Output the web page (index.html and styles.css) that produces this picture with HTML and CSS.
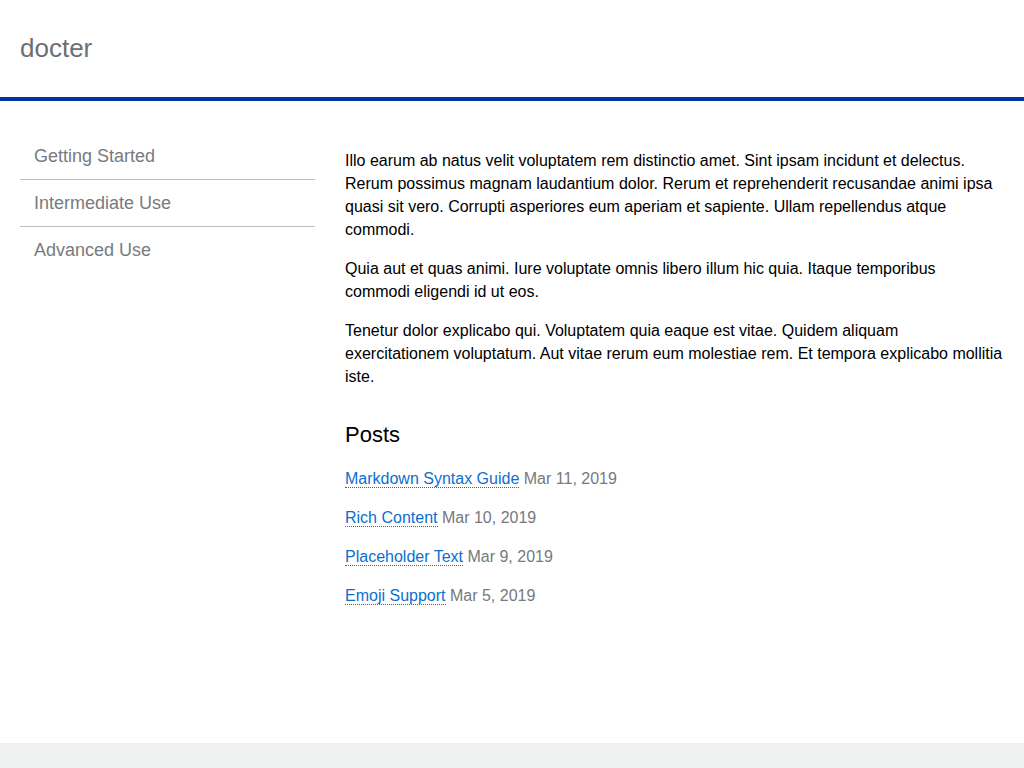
FILE: index.html
```html
<!DOCTYPE html>
<html lang="en">
<head>
<meta charset="utf-8">
<title>docter</title>
<link rel="stylesheet" href="styles.css">
</head>
<body>
<header class="site-header">
  <a class="brand" href="#">docter</a>
</header>
<div class="page">
  <nav class="sidebar">
    <ul class="nav-list">
      <li class="nav-item"><a href="#">Getting Started</a></li>
      <li class="nav-item"><a href="#">Intermediate Use</a></li>
      <li class="nav-item"><a href="#">Advanced Use</a></li>
    </ul>
  </nav>
  <main class="content">
    <p>Illo earum ab natus velit voluptatem rem distinctio amet. Sint ipsam incidunt et delectus. Rerum possimus magnam laudantium dolor. Rerum et reprehenderit recusandae animi ipsa quasi sit vero. Corrupti asperiores eum aperiam et sapiente. Ullam repellendus atque commodi.</p>
    <p>Quia aut et quas animi. Iure voluptate omnis libero illum hic quia. Itaque temporibus commodi eligendi id ut eos.</p>
    <p>Tenetur dolor explicabo qui. Voluptatem quia eaque est vitae. Quidem aliquam exercitationem voluptatum. Aut vitae rerum eum molestiae rem. Et tempora explicabo mollitia iste.</p>
    <h2 class="posts-title">Posts</h2>
    <ul class="posts">
      <li><a href="#">Markdown Syntax Guide</a> <span class="date">Mar 11, 2019</span></li>
      <li><a href="#">Rich Content</a> <span class="date">Mar 10, 2019</span></li>
      <li><a href="#">Placeholder Text</a> <span class="date">Mar 9, 2019</span></li>
      <li><a href="#">Emoji Support</a> <span class="date">Mar 5, 2019</span></li>
    </ul>
  </main>
</div>
<footer class="site-footer"></footer>
</body>
</html>
```

FILE: styles.css
```css
html, body {
  margin: 0;
  padding: 0;
}
body {
  font-family: "Liberation Sans", Arial, sans-serif;
  font-size: 16px;
  line-height: 23px;
  color: #000;
  background: #fff;
  min-height: 100vh;
  display: flex;
  flex-direction: column;
}
.site-header {
  height: 97px;
  border-bottom: 4px solid #0033a0;
  display: flex;
  align-items: center;
  padding: 0 20px;
}
.brand {
  font-size: 26px;
  color: #6c6f72;
  text-decoration: none;
  line-height: 30px;
  margin-top: -2px;
}
.page {
  flex: 1;
  display: flex;
  gap: 30px;
  padding: 32px 20px 0 20px;
}
.sidebar {
  width: 295px;
  flex: none;
}
.nav-list {
  list-style: none;
  margin: 0;
  padding: 0;
}
.nav-item {
  border-bottom: 1px solid #c0c0c0;
}
.nav-item:last-child {
  border-bottom: none;
}
.nav-item a {
  display: block;
  padding: 13px 14px 12px 14px;
  font-size: 18px;
  line-height: 21px;
  color: #777b7e;
  text-decoration: none;
}
.content {
  flex: 1;
  min-width: 0;
}
.content p {
  margin: 16px 0;
}
.posts-title {
  font-size: 22px;
  font-weight: normal;
  line-height: 26px;
  margin: 34px 0 19px 0;
}
.posts {
  list-style: none;
  margin: 0;
  padding: 0;
}
.posts li {
  margin-bottom: 16px;
}
.posts a {
  color: #0b6fd0;
  text-decoration: none;
  border-bottom: 1px dotted #0b6fd0;
}
.date {
  color: #77797c;
}
.site-footer {
  height: 25px;
  background: #f0f2f1;
}
```
